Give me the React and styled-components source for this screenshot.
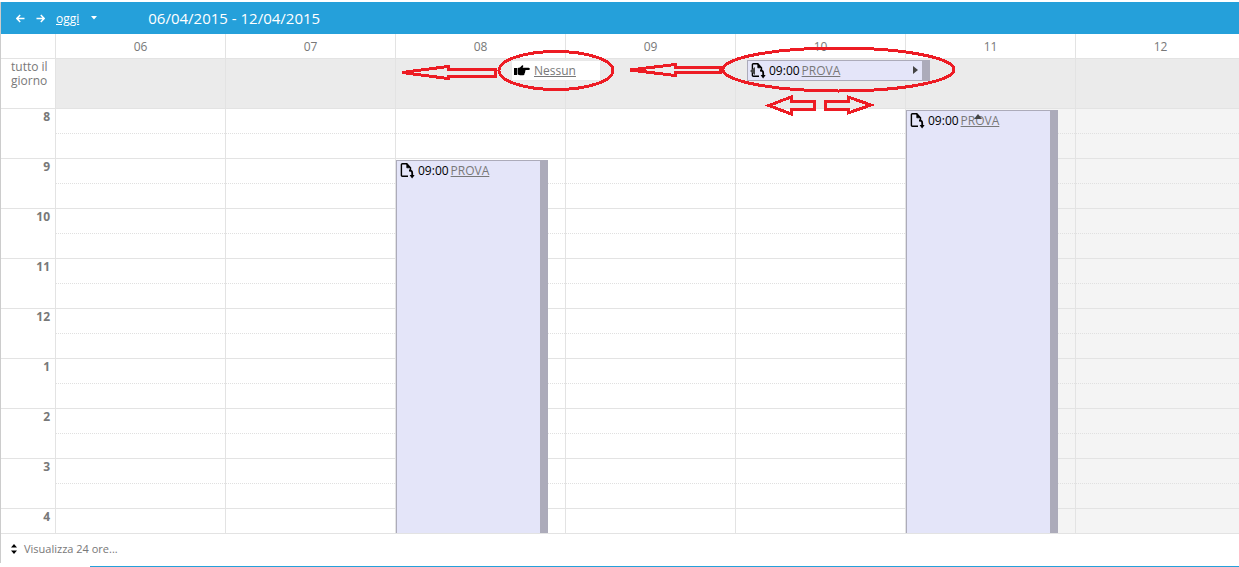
import styled, { createGlobalStyle } from 'styled-components';

const GlobalStyles = createGlobalStyle`
  * {
    margin: 0;
    padding: 0;
    box-sizing: border-box;
  }

  body {
    background-color: #fff;
    color: #787878;
    font-family: "Open Sans", "Noto Sans", sans-serif;
    font-size: 12px;
    line-height: 16px;
    overflow: hidden;
  }

  a {
    color: #787878;
  }

  svg {
    display: block;
    flex: none;
  }
`;

const Page = styled.main`
  position: relative;
  padding-top: 2px;
  overflow: hidden;
`;

const Scheduler = styled.section`
  border-left: 1px solid #ccc;
`;

const Toolbar = styled.header`
  display: flex;
  align-items: center;
  height: 32px;
  padding-left: 9px;
  color: #fff;
  background-color: #25a0da;
`;

const IconButton = styled.button`
  display: flex;
  align-items: center;
  justify-content: center;
  width: 20px;
  height: 20px;
  border: none;
  color: inherit;
  background: none;
  cursor: pointer;
`;

const TodayLink = styled.a`
  margin-left: 6px;
  margin-right: 5px;
  padding-top: 2px;
  color: #fff;
`;

const Period = styled.h2`
  margin-left: 44px;
  font-size: 15px;
  font-weight: 400;
  line-height: 20px;
`;

// The last day runs a little past the window's right edge
const Table = styled.div`
  display: grid;
  grid-template-columns: 54px repeat(7, 1fr);
  width: calc(100% + 6px);
`;

const DayHead = styled.div`
  height: 25px;
  border-left: 1px solid #e3e3e3;
  border-bottom: 1px solid #e3e3e3;
  line-height: 25px;
  text-align: center;
`;

const Corner = styled(DayHead)`
  border-left: none;
`;

const AllDayLabel = styled.div`
  height: 50px;
  padding: 1px 6px 0 10px;
  border-bottom: 1px solid #e3e3e3;
  line-height: 14px;
`;

const AllDayCell = styled.div`
  position: relative;
  border-left: 1px solid #e3e3e3;
  border-bottom: 1px solid #e3e3e3;
  background-color: #ebebeb;
`;

const Hours = styled(Table)`
  height: 425px;
  border-bottom: 1px solid #e3e3e3;
  overflow: hidden;
`;

const HourLabel = styled.div`
  height: 50px;
  padding-right: 5px;
  border-bottom: 1px solid #e3e3e3;
  font-weight: 700;
  text-align: right;
`;

const DayColumn = styled.div`
  position: relative;
  border-left: 1px solid #e3e3e3;
  background-color: ${(props) => (props.$off ? '#f4f4f4' : '#fff')};
`;

const HourCell = styled.div`
  height: 50px;
  border-bottom: 1px solid #e3e3e3;

  &::before {
    content: "";
    display: block;
    height: 24px;
    border-bottom: 1px dotted #e0e0e0;
  }
`;

const Appointment = styled.article`
  position: absolute;
  top: ${(props) => props.$top}px;
  left: ${(props) => props.$left}px;
  z-index: 1;
  display: flex;
  align-items: flex-start;
  width: ${(props) => props.$width}px;
  height: ${(props) => props.$height}px;
  padding: 2px 0 0 3px;
  border: 1px solid #acabba;
  border-right-width: 8px;
  color: #000;
  background-color: #e4e5f9;
`;

const AppointmentText = styled.p`
  display: flex;
  gap: 2px;
  margin-left: 3px;
  line-height: 16px;
`;

const StartMark = styled.span`
  position: absolute;
  top: 6px;
  left: 2px;
`;

const EndMark = styled.span`
  margin: 3px 4px 0 auto;
`;

const TopMark = styled.span`
  position: absolute;
  top: 3px;
  left: 67px;
`;

const Tooltip = styled.div`
  position: absolute;
  top: 1px;
  left: 115px;
  z-index: 1;
  display: flex;
  align-items: center;
  gap: 4px;
  width: 90px;
  height: 21px;
  padding-left: 2px;
  border: 1px solid #e8e8e8;
  background-color: #fff;
`;

const Footer = styled.footer`
  display: flex;
  align-items: center;
  height: 29px;
  padding-left: 9px;
`;

const FooterButton = styled.button`
  display: flex;
  align-items: center;
  gap: 6px;
  border: none;
  color: inherit;
  background: none;
  font: inherit;
  font-size: 11px;
  cursor: pointer;
`;

const BottomRule = styled.hr`
  height: 2px;
  margin: 3px 0 0 90px;
  border: none;
  background-color: #25a0da;
`;

const Marks = styled.svg`
  position: absolute;
  top: 40px;
  left: 395px;
  z-index: 2;
  pointer-events: none;
`;

const days = ['06', '07', '08', '09', '10', '11', '12'];
const hours = ['8', '9', '10', '11', '12', '1', '2', '3', '4'];

function Arrow({ flip }) {
  return (
    <svg width="9" height="9" viewBox="0 0 9 9" fill="none" stroke="currentColor" strokeWidth="1.5">
      <path d={flip ? 'M0.5 4.5H8M4.8 1L8.2 4.5L4.8 8' : 'M8.5 4.5H1M4.2 1L0.8 4.5L4.2 8'} />
    </svg>
  );
}

function FileIcon() {
  return (
    <svg width="15" height="16" viewBox="0 0 15 16" fill="none" stroke="#000" strokeWidth="1.4">
      <path d="M8 13.2H2.4Q1.4 13.2 1.4 12.2V1.8Q1.4 0.8 2.4 0.8H6.8L10.5 4.8V7" />
      <path d="M6.8 0.8V4.8H10.5Z" fill="#000" strokeWidth="0.8" />
      <path d="M9 7.5Q12.2 7.4 12.2 10V14" strokeWidth="1.8" />
      <path d="M9.6 12H14.6L12.1 15.5Z" fill="#000" stroke="none" />
    </svg>
  );
}

function HandIcon() {
  return (
    <svg width="16" height="11" viewBox="0 0 16 11" fill="#000">
      <path d="M0 3H3V10H0ZM3.6 3L6 2.4L8.2 0.3Q9.6 0.2 9.2 1.4L8.6 2.8H14.6Q16 3 15.9 4.1Q15.8 5 14.6 5H11.3Q12 6 11 6.8Q11.4 7.8 10.5 8.4Q10.7 10 9.4 10.3H6L3.6 9.4Z" />
    </svg>
  );
}

function Entry() {
  return (
    <>
      <FileIcon />
      <AppointmentText>
        <time>09:00</time>
        <a href="#prova">PROVA</a>
      </AppointmentText>
    </>
  );
}

function App() {
  return (
    <Page>
      <GlobalStyles />
      <Scheduler>
        <Toolbar>
          <IconButton aria-label="Precedente"><Arrow /></IconButton>
          <IconButton aria-label="Successivo"><Arrow flip /></IconButton>
          <TodayLink href="#oggi">oggi</TodayLink>
          <IconButton aria-label="Calendario">
            <svg width="6" height="4" viewBox="0 0 6 4"><path d="M0 0H6L3 3.5Z" fill="#fff" /></svg>
          </IconButton>
          <Period>06/04/2015 - 12/04/2015</Period>
        </Toolbar>

        <Table>
          <Corner />
          {days.map((day) => (
            <DayHead key={day}>{day}</DayHead>
          ))}
          <AllDayLabel>tutto il giorno</AllDayLabel>
          {days.map((day) => (
            <AllDayCell key={day}>
              {day === '08' && (
                <Tooltip>
                  <HandIcon />
                  <a href="#nessun">Nessun</a>
                </Tooltip>
              )}
              {day === '10' && (
                <Appointment $top={1} $left={11} $width={183} $height={21}>
                  <StartMark>
                    <svg width="5" height="8" viewBox="0 0 5 8"><path d="M5 0L0 4L5 8Z" fill="#444" /></svg>
                  </StartMark>
                  <Entry />
                  <EndMark>
                    <svg width="5" height="8" viewBox="0 0 5 8"><path d="M0 0L5 4L0 8Z" fill="#444" /></svg>
                  </EndMark>
                </Appointment>
              )}
            </AllDayCell>
          ))}
        </Table>

        <Hours>
          <div>
            {hours.map((hour) => (
              <HourLabel key={hour}>{hour}</HourLabel>
            ))}
          </div>
          {days.map((day) => (
            <DayColumn key={day} $off={day === '11' || day === '12'}>
              {hours.map((hour) => (
                <HourCell key={hour} />
              ))}
              {day === '08' && (
                <Appointment $top={51} $left={0} $width={152} $height={400}>
                  <Entry />
                </Appointment>
              )}
              {day === '11' && (
                <Appointment $top={1} $left={0} $width={152} $height={450}>
                  <Entry />
                  <TopMark>
                    <svg width="8" height="5" viewBox="0 0 8 5"><path d="M0 5L4 0L8 5Z" fill="#444" /></svg>
                  </TopMark>
                </Appointment>
              )}
            </DayColumn>
          ))}
        </Hours>

        <Footer>
          <FooterButton>
            <svg width="8" height="10" viewBox="0 0 8 10"><path d="M1 3.5L4 0L7 3.5ZM1 6.5H7L4 10Z" fill="#000" /></svg>
            Visualizza 24 ore...
          </FooterButton>
        </Footer>
      </Scheduler>
      <BottomRule />

      <Marks
        width="570"
        height="80"
        viewBox="395 40 570 80"
        fill="none"
        stroke="#ed1c24"
        strokeWidth="3"
        shapeRendering="crispEdges"
      >
        <ellipse cx="556" cy="70.5" rx="57" ry="19" />
        <ellipse cx="838.5" cy="69.5" rx="115.5" ry="21.5" />
        <path d="M495 69H448V66.5L402 72.5L448 78.5V76H495Z" />
        <path d="M720 67.5H675V64.5L630 70L675 75.5V72.5H720Z" />
        <path d="M814 101H791V97L769 105.5L791 114V109.5H814Z" />
        <path d="M825 101H848V97L871 105L848 113V109H825Z" />
      </Marks>
    </Page>
  );
}

export default App;
